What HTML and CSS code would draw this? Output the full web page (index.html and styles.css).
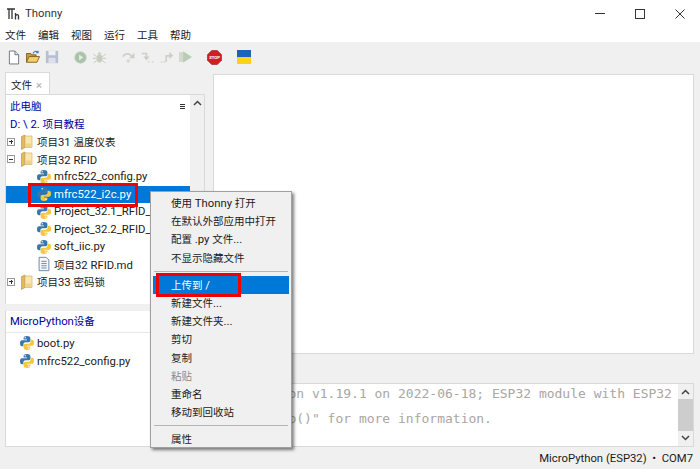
FILE: index.html
```html
<!DOCTYPE html>
<html lang="zh-CN">
<head>
<meta charset="UTF-8">
<meta name="viewport" content="width=device-width, initial-scale=1.0">
<title>Thonny</title>
<link rel="stylesheet" href="styles.css">
</head>
<body>
<svg class="defs" width="0" height="0">
  <defs>
    <symbol id="py" viewBox="0 0 16 16">
      <path fill="#3a76a8" d="M8 1C5.600 1 4.600 1.800 4.600 3v1.600H8v.6H3C1.600 5.200 1 6.400 1 8.200s.7 3 2 3h1.400V9.400c0-1.200 1-2.100 2.200-2.100h3.100c1 0 1.700-.8 1.700-1.700V3C11.400 1.800 10 1 8 1z"/>
      <path fill="#f4c73e" d="M8 15c2.400 0 3.400-.8 3.400-2v-1.600H8v-.6h5c1.400 0 2-1.200 2-3s-.7-3-2-3h-1.400v1.800c0 1.200-1 2.100-2.200 2.100H6.300c-1 0-1.700.8-1.700 1.700V13c0 1.200 1.400 2 3.400 2z"/>
      <circle cx="6.200" cy="2.800" r=".7" fill="#fff"/>
      <circle cx="9.800" cy="13.200" r=".7" fill="#fff"/>
    </symbol>
    <symbol id="folder" viewBox="0 0 16 16">
      <path fill="#e2b95c" stroke="#b99a4a" stroke-width=".7" d="M2.500 2.500 6 1v12.500l-3.500 2z"/>
      <path fill="#f8e6ae" stroke="#d0b46a" stroke-width=".7" d="M6 2h7v11.500H6z"/>
      <path fill="#efd484" d="M7 9.500h5.500v3.500H7z"/>
    </symbol>
  </defs>
</svg>

<header class="titlebar">
  <svg class="app-logo" width="13" height="12" viewBox="0 0 13 12">
    <path fill="none" stroke="#333" stroke-width="1.300" d="M0 1h8M2 1v10M5 1v10M8.500 5v6.500M8.500 8c.8-1.800 3-1.800 3 0v3.500"/>
  </svg>
  <span class="app-name">Thonny</span>
  <div class="win-btns">
    <span class="win-min"></span>
    <span class="win-max"></span>
    <svg width="10" height="10" viewBox="0 0 10 10"><path stroke="#333" stroke-width="1" d="M.5.500l9 9M9.500.500l-9 9"/></svg>
  </div>
</header>

<nav class="menubar cn">
  <span>文件</span><span>编辑</span><span>视图</span><span>运行</span><span>工具</span><span>帮助</span>
</nav>

<div class="toolbar">
  <svg class="tool" width="12" height="15" viewBox="0 0 13 15"><path fill="#fff" stroke="#6b7280" d="M1.500.5h6l4 4v10h-10z"/><path fill="#dfe5ee" stroke="#6b7280" d="M7.500.5v4h4"/></svg>
  <svg class="tool tool-open" width="14" height="14" viewBox="0 0 16 16"><path fill="#c89a3c" stroke="#7a5a1c" d="M.5 14V4h5l1 1.500h5V8"/><path fill="#f3cf6e" stroke="#7a5a1c" d="M.5 14 3.500 7.500h12l-3 6.500z"/><path fill="none" stroke="#4a7db0" stroke-width="1.300" d="M8 4c1-2.500 3.500-3 5.500-1.500M13.800.8v2.200h-2.200"/></svg>
  <svg class="tool gap-r" width="14" height="14" viewBox="0 0 16 16"><path fill="#b9bfd2" d="M1 1h14v14H1z"/><path fill="#eef0f5" d="M4 1h8v5H4z"/><path fill="#dde0ea" d="M4 9h8v6H4z"/></svg>
  <svg class="tool" width="13" height="13" viewBox="0 0 18 18"><circle cx="9" cy="9" r="8" fill="#a9c3a9" stroke="#c5cfc5"/><path fill="#e4ebe2" d="M7 5l6 4-6 4z"/></svg>
  <svg class="tool gap-r" width="15" height="15" viewBox="0 0 18 18"><ellipse cx="9" cy="10" rx="3.500" ry="5" fill="#c4cdbf"/><circle cx="9" cy="4.500" r="2" fill="#cfd4c9"/><path stroke="#c8cbc4" stroke-width="1.200" d="M1.500 5l4 3M16.500 5l-4 3M1 10h4.500M17 10h-4.500M2 15.500l3.800-3M16 15.500l-3.800-3"/></svg>
  <svg class="tool" width="14" height="12" viewBox="0 0 18 15"><path fill="none" stroke="#cfcfcb" stroke-width="2.200" d="M1 7c2-4 8-5 11-1"/><path fill="#c8d0c2" d="M16 2v7H9z"/><circle cx="8" cy="12.500" r="2" fill="#d4d6d0"/></svg>
  <svg class="tool" width="14" height="12" viewBox="0 0 18 15"><path fill="none" stroke="#cfcfcb" stroke-width="2.200" d="M1 3h6v5"/><path fill="#c8d0c2" d="M3 7h8l-4 5z"/><path stroke="#d4d6d0" stroke-width="2" d="M9 14h2M14 14h2"/></svg>
  <svg class="tool" width="14" height="12" viewBox="0 0 18 15"><path fill="none" stroke="#cfcfcb" stroke-width="2.200" d="M8 14V6h5"/><path fill="#c8d0c2" d="M12 1v9l5-4.500z"/><path stroke="#d4d6d0" stroke-width="2" d="M1 14h2M4.500 14h2"/></svg>
  <svg class="tool gap-r" width="13" height="12" viewBox="0 0 16 14"><path fill="#d5d8d0" d="M0 1h5v12H0z"/><path fill="#b9cdb4" d="M5 0l11 7-11 7z"/></svg>
  <svg class="tool gap-r" width="15" height="15" viewBox="0 0 16 16"><path fill="#cf1f22" stroke="#8e1517" stroke-width=".6" d="M5 .5h6L15.500 5v6L11 15.500H5L.5 11V5z"/><text x="8" y="9.800" class="stop-text" text-anchor="middle">STOP</text></svg>
  <svg class="tool" width="14" height="14" viewBox="0 0 14 14"><path fill="#1c62ba" d="M0 0h14v7H0z"/><path fill="#fcd116" d="M0 7h14v7H0z"/></svg>
</div>

<main class="workspace">
  <aside class="side">
    <div class="tabs">
      <div class="tab"><span class="cn">文件</span><span class="tab-x">×</span></div>
    </div>
    <div class="side-body">
      <div class="pane pane-top">
        <div class="tree-wrap">
          <div class="loc">
            <div class="loc-row"><span class="cn">此电脑</span><span class="loc-menu"></span></div>
            <div>D: \ 2. <span class="cn">项目教程</span></div>
          </div>
          <ul class="tree">
            <li class="node"><span class="box plus"></span><svg class="ic"><use href="#folder"/></svg><span><span class="cn">项目</span>31 <span class="cn">温度仪表</span></span></li>
            <li class="node"><span class="box"></span><svg class="ic"><use href="#folder"/></svg><span><span class="cn">项目</span>32 RFID</span></li>
            <li class="node file"><svg class="ic"><use href="#py"/></svg>mfrc522_config.py</li>
            <li class="node file selected"><svg class="ic"><use href="#py"/></svg>mfrc522_i2c.py</li>
            <li class="node file"><svg class="ic"><use href="#py"/></svg>Project_32.1_RFID_Read.py</li>
            <li class="node file"><svg class="ic"><use href="#py"/></svg>Project_32.2_RFID_Change.py</li>
            <li class="node file"><svg class="ic"><use href="#py"/></svg>soft_iic.py</li>
            <li class="node file"><svg class="ic" viewBox="0 0 16 18"><path fill="#f4f8fc" stroke="#5f7f9f" d="M2.500 1.500h8l3 3v12h-11z"/><path stroke="#5f7f9f" d="M5 6h6M5 8.500h6M5 11h6M5 13.500h6"/></svg><span><span class="cn">项目</span>32 RFID.md</span></li>
            <li class="node"><span class="box plus"></span><svg class="ic"><use href="#folder"/></svg><span><span class="cn">项目</span>33 <span class="cn">密码锁</span></span></li>
          </ul>
        </div>
        <div class="vscroll">
          <svg width="9" height="6" viewBox="0 0 9 6"><path fill="none" stroke="#444" stroke-width="1.500" d="M1 5l3.500-3.500L8 5"/></svg>
        </div>
      </div>
      <div class="pane-split"></div>
      <div class="pane pane-bottom">
        <div class="loc loc-device">MicroPython<span class="cn">设备</span></div>
        <ul class="tree">
          <li class="node device"><svg class="ic"><use href="#py"/></svg>boot.py</li>
          <li class="node device"><svg class="ic"><use href="#py"/></svg>mfrc522_config.py</li>
        </ul>
      </div>
    </div>
  </aside>

  <section class="right">
    <div class="editor"></div>
    <div class="shell">
      <pre class="shell-text">MicroPython v1.19.1 on 2022-06-18; ESP32 module with ESP32
Type "help()" for more information.</pre>
      <div class="shell-scroll">
        <svg width="9" height="6" viewBox="0 0 9 6"><path fill="none" stroke="#444" stroke-width="1.500" d="M1 5l3.500-3.500L8 5"/></svg>
        <div class="shell-thumb"></div>
        <svg width="9" height="6" viewBox="0 0 9 6"><path fill="none" stroke="#444" stroke-width="1.500" d="M1 1l3.500 3.500L8 1"/></svg>
      </div>
    </div>
  </section>
</main>

<footer class="statusbar">MicroPython (ESP32) &nbsp;•&nbsp; COM7</footer>

<div class="ctx">
  <div class="ctx-item"><span class="cn">使用</span> Thonny <span class="cn">打开</span></div>
  <div class="ctx-item cn">在默认外部应用中打开</div>
  <div class="ctx-item"><span class="cn">配置</span> .py <span class="cn">文件</span>...</div>
  <div class="ctx-item cn">不显示隐藏文件</div>
  <div class="ctx-sep"></div>
  <div class="ctx-item active"><span class="cn">上传到</span> /</div>
  <div class="ctx-item"><span class="cn">新建文件</span>...</div>
  <div class="ctx-item"><span class="cn">新建文件夹</span>...</div>
  <div class="ctx-item cn">剪切</div>
  <div class="ctx-item cn">复制</div>
  <div class="ctx-item cn off">粘贴</div>
  <div class="ctx-item cn">重命名</div>
  <div class="ctx-item cn">移动到回收站</div>
  <div class="ctx-sep"></div>
  <div class="ctx-item cn">属性</div>
</div>

<div class="mark mark-file"></div>
<div class="mark mark-upload"></div>
</body>
</html>
```

FILE: styles.css
```css
* {
  box-sizing: border-box;
}

html, body {
  margin: 0;
  padding: 0;
}

body {
  position: relative;
  width: 700px;
  height: 469px;
  overflow: hidden;
  background-color: #f0f0f0;
  color: #1a1a1a;
  font-family: Roboto, "Noto Sans CJK SC", sans-serif;
  font-size: 11.300px;
  display: flex;
  flex-direction: column;
}

.cn {
  font-family: "Noto Sans CJK SC", sans-serif;
  font-size: 10.500px;
}

.defs {
  position: absolute;
}

ul {
  list-style: none;
  margin: 0;
  padding: 0;
}

/* title + menu */
.titlebar {
  height: 27px;
  background-color: #fff;
  display: flex;
  align-items: center;
  padding-left: 7px;
}

.app-logo {
  margin-right: 5px;
}

.app-name {
  color: #333;
}

.win-btns {
  margin-left: auto;
  margin-right: 15px;
  display: flex;
  align-items: center;
  gap: 30px;
}

.win-min {
  width: 10px;
  height: 1px;
  background-color: #333;
}

.win-max {
  width: 10px;
  height: 10px;
  border: 1px solid #333;
}

.menubar {
  height: 15px;
  background-color: #fff;
  display: flex;
  gap: 12px;
  padding-left: 5px;
  line-height: 15px;
}

.toolbar {
  height: 30px;
  display: flex;
  align-items: center;
  padding-left: 8px;
  gap: 5px;
}

.tool {
  flex: none;
}

.tool-open {
  margin-left: 1px;
}

.gap-r {
  margin-right: 10px;
}

.stop-text {
  fill: #fff;
  font-size: 4.500px;
  font-weight: bold;
}

/* main area */
.workspace {
  flex: 1;
  display: flex;
  padding: 0 6px 2px 5px;
  min-height: 0;
}

.side {
  width: 200px;
  display: flex;
  flex-direction: column;
}

.tabs {
  height: 22px;
  display: flex;
  align-items: flex-end;
}

.tab {
  width: 45px;
  height: 22px;
  background-color: #fff;
  border: 1px solid #d9d9d9;
  border-bottom: 0;
  padding-left: 5px;
  line-height: 23px;
}

.tab-x {
  color: #aaa;
  margin-left: 4px;
}

.side-body {
  flex: 1;
  display: flex;
  flex-direction: column;
  min-height: 0;
}

.pane {
  background-color: #fff;
  border: 1px solid #d9d9d9;
}

.pane-top {
  height: 210px;
  display: flex;
  border-bottom: 0;
}

.tree-wrap {
  flex: 1;
  min-width: 0;
}

.loc {
  color: #0000a0;
  padding: 2px 4px 0 4px;
  line-height: 18px;
  height: 38px;
}

.loc-row {
  display: flex;
  justify-content: space-between;
  padding-right: 1px;
}

.loc-menu {
  width: 5px;
  height: 5px;
  margin-top: 7px;
  border-top: 1px solid #333;
  border-bottom: 1px solid #333;
  background: linear-gradient(#333, #333) center / 100% 1px no-repeat;
}

.node {
  height: 17.500px;
  display: flex;
  align-items: center;
  white-space: nowrap;
  padding-left: 1px;
  color: #1a1a1a;
}

.file {
  padding-left: 30px;
}

.selected {
  background-color: #0078d7;
  color: #fff;
}

.device {
  height: 18px;
  padding-left: 13px;
}

.box {
  width: 8px;
  height: 8px;
  border: 1px solid #999;
  margin-right: 4px;
  flex: none;
  background: linear-gradient(#333, #333) center / 4px 1px no-repeat #fff;
}

.plus {
  background:
    linear-gradient(#333, #333) center / 4px 1px no-repeat,
    linear-gradient(#333, #333) center / 1px 4px no-repeat,
    #fff;
}

.ic {
  width: 16px;
  height: 16px;
  flex: none;
  margin-right: 2px;
}

.vscroll {
  width: 14px;
  background-color: #f0f0f0;
  display: flex;
  justify-content: center;
  padding-top: 5px;
  flex: none;
}

.pane-split {
  height: 6px;
}

.pane-bottom {
  flex: 1;
  border-top: 1px solid #eee;
}

.loc-device {
  height: 22px;
  padding-top: 1px;
  margin-bottom: 1px;
  border-bottom: 1px solid #e8e8e8;
}

/* right side */
.right {
  flex: 1;
  margin-left: 8px;
  padding-top: 2px;
  display: flex;
  flex-direction: column;
  min-width: 0;
}

.editor {
  height: 280px;
  background-color: #fff;
  border: 1px solid #d9d9d9;
}

.shell {
  margin-top: 29px;
  flex: 1;
  background-color: #fff;
  border: 1px solid #d9d9d9;
  display: flex;
  min-height: 0;
}

.shell-text {
  flex: 1;
  margin: -3px 0 0;
  padding-left: 4px;
  font-family: "DejaVu Sans Mono", monospace;
  font-size: 13px;
  line-height: 25px;
  color: #aaa6a2;
  white-space: pre;
  overflow: hidden;
  min-width: 0;
}

.shell-scroll {
  width: 15px;
  flex: none;
  background-color: #f0f0f0;
  display: flex;
  flex-direction: column;
  align-items: center;
  justify-content: space-between;
  padding: 5px 0;
}

.shell-thumb {
  width: 100%;
  flex: 1;
  margin: 4px 0;
  background-color: #cdcdcd;
}

.statusbar {
  height: 20px;
  text-align: right;
  padding-right: 7px;
  line-height: 20px;
  color: #1a1a1a;
}

/* popup menu over the tree */
.ctx {
  position: absolute;
  left: 150px;
  top: 191px;
  width: 142px;
  height: 257px;
  background-color: #f0f0f0;
  border: 1px solid #a0a0a0;
  box-shadow: 2px 2px 3px rgba(0, 0, 0, 0.5);
  padding: 2px;
}

.ctx-item {
  height: 18.200px;
  line-height: 18px;
  padding-left: 18px;
  white-space: nowrap;
}

.ctx-sep {
  height: 1px;
  background-color: #b5b5b5;
  margin: 4px 1px 4px 1px;
}

.active {
  background-color: #0078d7;
  color: #fff;
}

.off {
  color: #8a8a8a;
}

/* red annotation rectangles */
.mark {
  position: absolute;
  border: 3px solid #f00000;
}

.mark-file {
  left: 28px;
  top: 183px;
  width: 110px;
  height: 24px;
}

.mark-upload {
  left: 156px;
  top: 273px;
  width: 85px;
  height: 24px;
}
```
